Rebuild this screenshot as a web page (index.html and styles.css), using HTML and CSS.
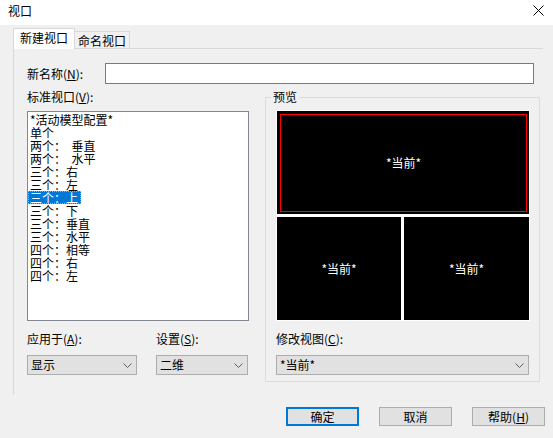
FILE: index.html
```html
<!DOCTYPE html>
<html lang="zh-CN">
<head>
<meta charset="utf-8">
<title>视口</title>
<link rel="stylesheet" href="styles.css">
</head>
<body>
<div class="titlebar">
  <span class="title">视口</span>
  <svg class="close" width="11" height="11" viewBox="0 0 11 11"><path d="M0.5 0.5L10.5 10.5M10.5 0.5L0.5 10.5" stroke="#000" stroke-width="1" fill="none"/></svg>
</div>
<div class="tabs">
  <div class="tab active">新建视口</div>
  <div class="tab inactive">命名视口</div>
</div>
<div class="panel">
  <div class="namerow">
    <span class="namelabel">新名称(<u>N</u>):</span>
    <div class="input"></div>
  </div>
  <div class="columns">
    <div class="left">
      <div class="label">标准视口(<u>V</u>):</div>
      <div class="listbox">
        <div class="item"><span>*活动模型配置*</span></div>
        <div class="item"><span>单个</span></div>
        <div class="item"><span>两个：&nbsp;&nbsp;垂直</span></div>
        <div class="item"><span>两个：&nbsp;&nbsp;水平</span></div>
        <div class="item"><span>三个：右</span></div>
        <div class="item"><span>三个：左</span></div>
        <div class="item sel"><span>三个：上</span></div>
        <div class="item"><span>三个：下</span></div>
        <div class="item"><span>三个：垂直</span></div>
        <div class="item"><span>三个：水平</span></div>
        <div class="item"><span>四个：相等</span></div>
        <div class="item"><span>四个：右</span></div>
        <div class="item"><span>四个：左</span></div>
      </div>
      <div class="opts">
        <div class="opt opt1">
          <div class="label">应用于(<u>A</u>):</div>
          <div class="combo"><span>显示</span><svg class="chev" width="9" height="5" viewBox="0 0 9 5"><polyline points="0.5,0.5 4.5,4.5 8.5,0.5" fill="none" stroke="#606060" stroke-width="1"/></svg></div>
        </div>
        <div class="opt opt2">
          <div class="label">设置(<u>S</u>):</div>
          <div class="combo"><span>二维</span><svg class="chev" width="9" height="5" viewBox="0 0 9 5"><polyline points="0.5,0.5 4.5,4.5 8.5,0.5" fill="none" stroke="#606060" stroke-width="1"/></svg></div>
        </div>
      </div>
    </div>
    <fieldset class="group">
      <legend>预览</legend>
      <div class="preview">
        <div class="vp top"><div class="active-vp">*当前*</div></div>
        <div class="vp bl">*当前*</div>
        <div class="vp br">*当前*</div>
      </div>
      <div class="label modlabel">修改视图(<u>C</u>):</div>
      <div class="combo wide"><span>*当前*</span><svg class="chev" width="9" height="5" viewBox="0 0 9 5"><polyline points="0.5,0.5 4.5,4.5 8.5,0.5" fill="none" stroke="#606060" stroke-width="1"/></svg></div>
    </fieldset>
  </div>
</div>
<div class="buttons">
  <div class="btn default">确定</div>
  <div class="btn">取消</div>
  <div class="btn">帮助(<u>H</u>)</div>
</div>
</body>
</html>
```
FILE: styles.css
```css
* { box-sizing: border-box; }
html, body { margin: 0; padding: 0; }
body {
  width: 553px;
  height: 438px;
  overflow: hidden;
  background: #f0f0f0;
  color: #000;
  font-family: "Noto Sans CJK SC", "Noto Sans", sans-serif;
  font-size: 12px;
}
u { text-decoration: underline; text-underline-offset: 1px; }

.titlebar {
  height: 25px;
  background: #fff;
  display: flex;
  justify-content: space-between;
  align-items: flex-start;
  padding: 4px 9px 0 8px;
  line-height: 14px;
}
.close { margin-top: 1px; }

.tabs {
  height: 23px;
  display: flex;
  align-items: flex-end;
  padding-left: 13px;
  position: relative;
  z-index: 1;
}
.tab {
  border: 1px solid #d9d9d9;
  border-bottom: none;
  line-height: 14px;
}
.tab.active {
  height: 21px;
  margin-bottom: -1px;
  background: #fff;
  padding: 2px 6px 0;
}
.tab.inactive {
  height: 17px;
  border-left: none;
  padding: 2px 3px 0;
}

.panel {
  margin-left: 13px;
  width: 530px;
  height: 347px;
  border-top: 1px solid #d9d9d9;
  border-left: 1px solid #d9d9d9;
  padding: 14px 0 0 13px;
}
.namerow {
  display: flex;
  align-items: center;
  height: 21px;
}
.namelabel { width: 78px; line-height: 14px; }
.input {
  width: 429px;
  height: 21px;
  border: 1px solid #7a7a7a;
  background: #fff;
}

.columns {
  display: flex;
  align-items: flex-start;
  margin-top: 6px;
}
.left { width: 222px; }
.label { height: 14px; line-height: 14px; white-space: nowrap; }

.listbox {
  margin-top: 7px;
  height: 210px;
  border: 1px solid #828790;
  background: #fff;
  padding-top: 1px;
}
.item { height: 13px; line-height: 13px; white-space: nowrap; }
.item span { display: inline-block; vertical-align: top; height: 13px; padding: 0 3px 0 2px; }
.item.sel span {
  background: #0078d7;
  color: #fff;
  outline: 1px dotted #ff9a2e;
  outline-offset: -1px;
}

.opts { display: flex; margin-top: 11px; }
.opt1 { width: 110px; }
.opt2 { width: 92px; margin-left: 19px; }

.combo {
  margin-top: 9px;
  height: 20px;
  border: 1px solid #adadad;
  background: #e1e1e1;
  display: flex;
  align-items: center;
  justify-content: space-between;
  padding: 0 4px 0 3px;
  line-height: 14px;
}
.chev { display: block; }

.group {
  margin: 0 0 0 16px;
  width: 275px;
  border: 1px solid #dcdcdc;
  padding: 0 9px 6px 10px;
  min-width: 0;
}
.group legend {
  padding: 0 2px;
  margin-left: -5px;
  line-height: 14px;
}
.preview {
  margin-top: 6px;
  width: 254px;
  height: 211px;
  background: #fff;
  padding: 1px;
  display: grid;
  grid-template-columns: 124px 125px;
  grid-template-rows: 103px 103px;
  gap: 3px;
}
.vp {
  background: #000;
  color: #fff;
  display: flex;
  align-items: center;
  justify-content: center;
  line-height: 14px;
}
.vp.top { grid-column: 1 / 3; padding: 3px 2px 2px 3px; align-items: stretch; justify-content: stretch; }
.active-vp {
  flex: 1;
  border: 1px solid #ff0000;
  display: flex;
  align-items: center;
  justify-content: center;
}
.modlabel { margin-top: 11px; }
.combo.wide { width: 253px; }

.buttons {
  display: flex;
  justify-content: flex-end;
  gap: 20px;
  padding-right: 8px;
  margin-top: 12px;
}
.btn {
  width: 73px;
  height: 19px;
  border: 1px solid #adadad;
  background: #e1e1e1;
  display: flex;
  align-items: center;
  justify-content: center;
  line-height: 14px;
}
.btn.default { border: 2px solid #0078d7; }
```
